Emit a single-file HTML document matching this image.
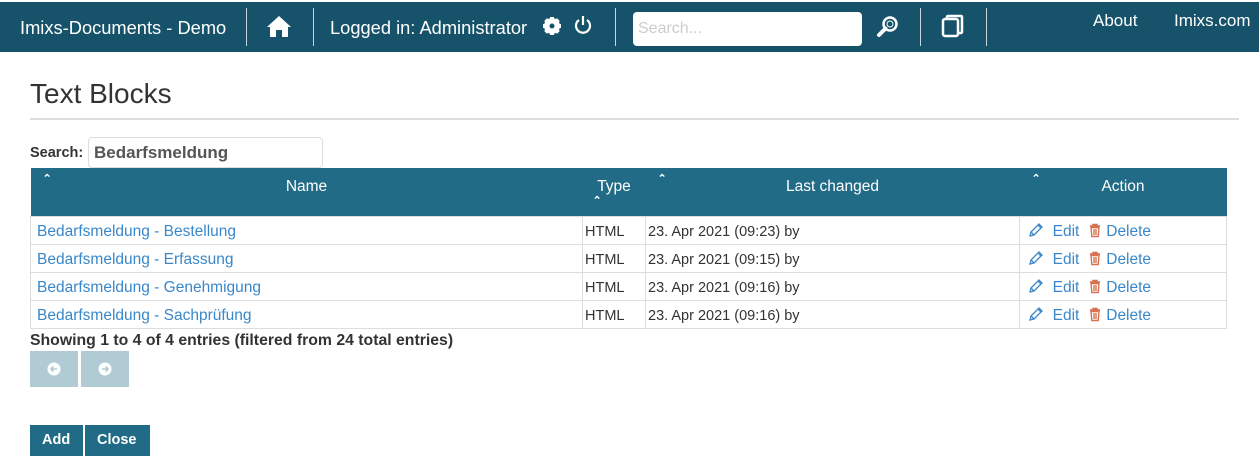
<!DOCTYPE html>
<html><head><meta charset="utf-8"><style>
*{box-sizing:border-box;margin:0;padding:0}
body{width:1259px;height:474px;background:#fff;font-family:"Liberation Sans",sans-serif;color:#333;position:relative;overflow:hidden}
.nav{position:absolute;left:0;top:2px;width:1259px;height:50px;background:#16536a;color:#fff;font-size:18.3px}
.nav .t{position:absolute;top:15px;white-space:nowrap}
.sep{position:absolute;top:6px;width:1px;height:38px;background:#c9d6db}
.srch{position:absolute;left:633px;top:10px;width:229px;height:34px;background:#fff;border-radius:4px;color:#ccc;font-size:16px;padding:8px 5px}
h1{position:absolute;left:30px;top:78px;font-weight:normal;font-size:28px;color:#333}
.hr{position:absolute;left:30px;top:118px;width:1209px;height:2px;background:#ddd}
.lbl{position:absolute;left:30px;top:145px;font-weight:bold;font-size:14.5px;white-space:nowrap}
.in{position:absolute;left:88px;top:137px;width:235px;height:31px;border:1px solid #ddd;border-radius:4px;font-weight:bold;font-size:17px;color:#555;padding:5px 5px}
table{position:absolute;left:30px;top:168px;width:1197px;border-collapse:collapse;font-size:15.5px}
th{background:#216b86;color:#fff;font-weight:normal;height:48px;vertical-align:top;padding-top:10px;position:relative}
th .c{position:absolute;left:12px;top:4px;font-size:11px;font-weight:bold}
td{height:28px;border:1px solid #ddd;padding:3px 6px 0;white-space:nowrap}
td.l{color:#3a87c9}
td.s{padding-left:2px;font-size:14.5px}
.a{color:#3a87c9;padding-left:8px}
.a svg{vertical-align:-2px}
.pb{position:absolute;top:351px;width:48px;height:36px;background:#b1cbd4}
.btn{position:absolute;top:425px;height:31px;background:#216b86;color:#fff;font-weight:bold;font-size:14.5px;padding:7px 12px}
</style></head><body>
<div class="nav">
<span class="t" style="left:20px">Imixs-Documents - Demo</span>
<div class="sep" style="left:246px"></div>
<svg style="position:absolute;left:266px;top:12px" width="26" height="24" viewBox="0 0 26 24"><path d="M13 2 L1 13 H4 V23 H10 V16 H16 V23 H22 V13 H25 Z" fill="#fff"/></svg>
<div class="sep" style="left:313px"></div>
<span class="t" style="left:330px">Logged in: Administrator</span>
<svg style="position:absolute;left:542px;top:14px" width="20" height="20" viewBox="0 0 20 20"><circle cx="10" cy="10" r="6" fill="none" stroke="#fff" stroke-width="4"/><g stroke="#fff" stroke-width="4"><path d="M10 1v18M1 10h18M3.6 3.6l12.8 12.8M16.4 3.6L3.6 16.4"/></g><circle cx="10" cy="10" r="2.5" fill="#16536a"/></svg>
<svg style="position:absolute;left:573px;top:12px" width="20" height="22" viewBox="0 0 20 22"><path d="M6 6a7 7 0 1 0 8 0" fill="none" stroke="#fff" stroke-width="2.2"/><path d="M10 2v9" stroke="#fff" stroke-width="2.2"/></svg>
<div class="sep" style="left:615px"></div>
<div class="srch">Search...</div>
<svg style="position:absolute;left:876px;top:13px" width="24" height="24" viewBox="0 0 24 24"><circle cx="14" cy="9" r="6.5" fill="none" stroke="#fff" stroke-width="2.5"/><circle cx="14" cy="9" r="3" fill="none" stroke="#fff" stroke-width="1"/><path d="M9.5 13.5L3 20" stroke="#fff" stroke-width="4" stroke-linecap="round"/></svg>
<div class="sep" style="left:920px"></div>
<svg style="position:absolute;left:941px;top:12px" width="24" height="24" viewBox="0 0 24 24"><rect x="2" y="5" width="15" height="17" rx="2" fill="none" stroke="#fff" stroke-width="2.5"/><path d="M6 4V3a1 1 0 0 1 1-1h13a1 1 0 0 1 1 1v15a1 1 0 0 1-1 1h-2" fill="none" stroke="#fff" stroke-width="2.5"/></svg>
<div class="sep" style="left:986px"></div>
<span class="t" style="left:1093px;top:9px;font-size:17px">About</span>
<span class="t" style="left:1174px;top:9px;font-size:17px">Imixs.com</span>
</div>
<h1>Text Blocks</h1>
<div class="hr"></div>
<div class="lbl">Search:</div>
<div class="in">Bedarfsmeldung</div>
<table>
<tr><th style="width:552px"><span class="c">&#8963;</span>Name</th><th style="width:63px">Type<span class="c" style="left:10px;top:26px">&#8963;</span></th><th style="width:374px"><span class="c">&#8963;</span>Last changed</th><th><span class="c">&#8963;</span>Action</th></tr>
<tr><td class="l">Bedarfsmeldung - Bestellung</td><td class="s">HTML</td><td class="s">23. Apr 2021 (09:23) by</td><td class="a"><svg width="16" height="16" viewBox="0 0 16 16"><path d="M2 14l1-4 8-8 3 3-8 8z M3 10l3 3 M10 3l3 3" fill="none" stroke="#3a87c9" stroke-width="1.3"/></svg>&nbsp; Edit &nbsp;<svg width="14" height="15" viewBox="0 0 14 15"><path d="M2 3h10M5 3V1.5h4V3M3 4.5l.8 9h6.4l.8-9z M6 6v6M8 6v6" fill="none" stroke="#d8714f" stroke-width="1.4"/></svg> Delete</td></tr>
<tr><td class="l">Bedarfsmeldung - Erfassung</td><td class="s">HTML</td><td class="s">23. Apr 2021 (09:15) by</td><td class="a"><svg width="16" height="16" viewBox="0 0 16 16"><path d="M2 14l1-4 8-8 3 3-8 8z M3 10l3 3 M10 3l3 3" fill="none" stroke="#3a87c9" stroke-width="1.3"/></svg>&nbsp; Edit &nbsp;<svg width="14" height="15" viewBox="0 0 14 15"><path d="M2 3h10M5 3V1.5h4V3M3 4.5l.8 9h6.4l.8-9z M6 6v6M8 6v6" fill="none" stroke="#d8714f" stroke-width="1.4"/></svg> Delete</td></tr>
<tr><td class="l">Bedarfsmeldung - Genehmigung</td><td class="s">HTML</td><td class="s">23. Apr 2021 (09:16) by</td><td class="a"><svg width="16" height="16" viewBox="0 0 16 16"><path d="M2 14l1-4 8-8 3 3-8 8z M3 10l3 3 M10 3l3 3" fill="none" stroke="#3a87c9" stroke-width="1.3"/></svg>&nbsp; Edit &nbsp;<svg width="14" height="15" viewBox="0 0 14 15"><path d="M2 3h10M5 3V1.5h4V3M3 4.5l.8 9h6.4l.8-9z M6 6v6M8 6v6" fill="none" stroke="#d8714f" stroke-width="1.4"/></svg> Delete</td></tr>
<tr><td class="l">Bedarfsmeldung - Sachprüfung</td><td class="s">HTML</td><td class="s">23. Apr 2021 (09:16) by</td><td class="a"><svg width="16" height="16" viewBox="0 0 16 16"><path d="M2 14l1-4 8-8 3 3-8 8z M3 10l3 3 M10 3l3 3" fill="none" stroke="#3a87c9" stroke-width="1.3"/></svg>&nbsp; Edit &nbsp;<svg width="14" height="15" viewBox="0 0 14 15"><path d="M2 3h10M5 3V1.5h4V3M3 4.5l.8 9h6.4l.8-9z M6 6v6M8 6v6" fill="none" stroke="#d8714f" stroke-width="1.4"/></svg> Delete</td></tr>
</table>
<div class="lbl" style="top:332px;font-size:15.8px">Showing 1 to 4 of 4 entries (filtered from 24 total entries)</div>
<div class="pb" style="left:30px"><svg style="position:absolute;left:17px;top:11px" width="14" height="14" viewBox="0 0 14 14"><circle cx="7" cy="7" r="6.5" fill="#fff"/><path d="M10 7H4M6.5 4.5L4 7l2.5 2.5" fill="none" stroke="#b1cbd4" stroke-width="1.6"/></svg></div>
<div class="pb" style="left:81px"><svg style="position:absolute;left:17px;top:11px" width="14" height="14" viewBox="0 0 14 14"><circle cx="7" cy="7" r="6.5" fill="#fff"/><path d="M4 7h6M7.5 4.5L10 7 7.5 9.5" fill="none" stroke="#b1cbd4" stroke-width="1.6"/></svg></div>
<div class="btn" style="left:30px;width:53px">Add</div>
<div class="btn" style="left:85px;width:65px">Close</div>
</body></html>
